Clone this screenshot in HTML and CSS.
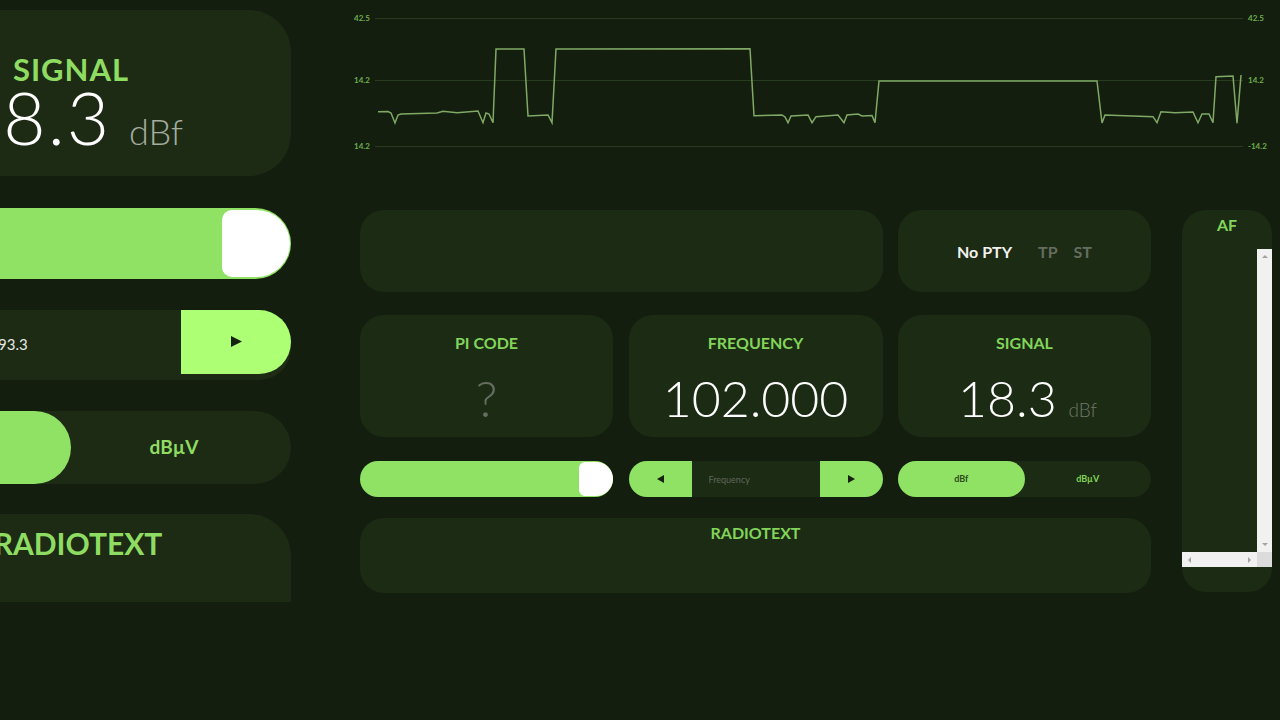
FILE: index.html
```html
<!DOCTYPE html>
<html lang="en">
<head>
    <meta charset="UTF-8">
    <title>Radio Tuner</title>
    <link rel="stylesheet" href="styles.css">
</head>
<body>
    <aside class="side">
        <div class="side-signal">
            <h2 class="side-title">SIGNAL</h2>
            <div class="side-value">18.3 <span class="side-unit">dBf</span></div>
        </div>
        <div class="side-slider"><div class="side-thumb"></div></div>
        <div class="side-freq">
            <span class="side-freq-text">93.3</span>
            <button class="side-freq-btn">
                <svg width="11" height="11" viewBox="0 0 11 11"><polygon points="0,0 11,5.5 0,11"/></svg>
            </button>
        </div>
        <div class="side-toggle">
            <div class="side-toggle-on"></div>
            <div class="side-toggle-off">dBµV</div>
        </div>
        <div class="side-radio"><h2 class="side-title">RADIOTEXT</h2></div>
    </aside>

    <main class="main">
        <svg class="chart" width="989" height="210" viewBox="291 0 989 210">
            <line class="grid-line" x1="375" y1="18.5" x2="1243" y2="18.5"/>
            <line class="grid-line" x1="375" y1="80.5" x2="1243" y2="80.5"/>
            <line class="grid-line" x1="375" y1="146.5" x2="1243" y2="146.5"/>
            <text class="axis" x="354" y="21">42.5</text>
            <text class="axis" x="354" y="83">14.2</text>
            <text class="axis" x="354" y="149">14.2</text>
            <text class="axis" x="1248" y="21">42.5</text>
            <text class="axis" x="1248" y="83">14.2</text>
            <text class="axis" x="1248" y="149">-14.2</text>
            <polyline class="trace" points="378,111.7 388,111.5 391,113 395,123 398,115 401,114 437,113 443,111.3 457,112.7 478,111 483,122.7 486,113 489,114 493,122.7 496,49 524,49 528,116 548,115 552,122.7 556,49 750,48.7 754,115.7 782,115 785,117 788,122.7 791,116 808,115 812,122.7 816,116.7 838,115 844,122.7 847,115 858,114 862,116 872,115.5 875,122.7 879,81 1097,81 1102,123 1105,115 1153,116.7 1157,122.7 1161,111.7 1175,112.7 1193,112 1198,122.7 1202,114 1209,114 1213,122.7 1216,76.7 1233,76 1237,123.3 1241,75"/>
        </svg>

        <div class="panel">
            <div class="board">
                <div class="card span-2"></div>
                <div class="card pty">
                    <span class="pty-name">No PTY</span>
                    <span class="flag">TP</span>
                    <span class="flag">ST</span>
                </div>

                <div class="card stat row-stat">
                    <h3 class="stat-title">PI CODE</h3>
                    <div class="stat-value muted">?</div>
                </div>
                <div class="card stat row-stat">
                    <h3 class="stat-title">FREQUENCY</h3>
                    <div class="stat-value">102.000</div>
                </div>
                <div class="card stat row-stat">
                    <h3 class="stat-title">SIGNAL</h3>
                    <div class="stat-value">18.3 <span class="stat-unit">dBf</span></div>
                </div>

                <div class="slider row-ctrl"><div class="thumb"></div></div>
                <div class="tuner row-ctrl">
                    <button class="tuner-btn tuner-left">
                        <svg width="7" height="8" viewBox="0 0 7 8"><polygon points="7,0 0,4 7,8"/></svg>
                    </button>
                    <span class="tuner-text">Frequency</span>
                    <button class="tuner-btn tuner-right">
                        <svg width="7" height="8" viewBox="0 0 7 8"><polygon points="0,0 7,4 0,8"/></svg>
                    </button>
                </div>
                <div class="toggle row-ctrl">
                    <div class="toggle-opt toggle-on">dBf</div>
                    <div class="toggle-opt">dBµV</div>
                </div>

                <div class="card radio span-3"><h3 class="stat-title">RADIOTEXT</h3></div>
            </div>

            <div class="af">
                <h3 class="stat-title af-title">AF</h3>
                <div class="af-list">
                    <div class="af-items"></div>
                    <div class="bar-v">
                        <span class="arrow arrow-up"></span>
                        <span class="arrow arrow-down"></span>
                    </div>
                    <div class="bar-h">
                        <span class="arrow arrow-left"></span>
                        <span class="arrow arrow-right"></span>
                    </div>
                    <div class="bar-corner"></div>
                </div>
            </div>
        </div>
    </main>
</body>
</html>
```

FILE: styles.css
```css
* {
    box-sizing: border-box;
}

body {
    margin: 0;
    height: 720px;
    overflow: hidden;
    display: flex;
    background: #141e0f;
    font-family: Lato, "Noto Sans", sans-serif;
}

h2, h3 {
    margin: 0;
}

button {
    border: none;
    padding: 0;
    display: flex;
    align-items: center;
    justify-content: center;
}

/* left column, cut off by the window */
.side {
    width: 291px;
    height: 602px;
    flex: none;
    overflow: hidden;
    padding-top: 10px;
    display: flex;
    flex-direction: column;
    gap: 31px;
}

.side > div {
    width: 440px;
    margin-left: -149px;
    flex: none;
    background: #1d2b15;
}

.side-signal {
    height: 166px;
    border-radius: 42px;
    text-align: center;
    padding-top: 40px;
}

.side-title {
    color: #8fdc62;
    font-size: 31px;
    font-weight: 700;
    line-height: 38px;
    letter-spacing: 1px;
}

.side-value {
    color: #fff;
    font-size: 73px;
    font-weight: 300;
    line-height: 70px;
    letter-spacing: 2px;
    margin-top: -6px;
}

.side-unit {
    color: #a4ad9e;
    font-size: 36px;
    letter-spacing: 0;
    margin-left: -4px;
}

.side > .side-slider {
    height: 71px;
    margin-top: 1px;
    border-radius: 36px;
    background: #90e264;
    display: flex;
    justify-content: flex-end;
    padding: 2px 1px;
}

.side-thumb {
    width: 68px;
    border-radius: 10px 34px 34px 10px;
    background: #fff;
}

.side > .side-freq {
    height: 70px;
    border-radius: 32px;
    display: flex;
    justify-content: space-between;
    align-items: flex-start;
}

.side-freq-text {
    color: #e6e8e3;
    font-size: 15px;
    margin: 25px 0 0 147px;
}

.side-freq-btn {
    width: 110px;
    height: 64px;
    background: #adff73;
    border-radius: 0 32px 32px 0;
}

.side-freq-btn svg {
    fill: #16210f;
    margin-bottom: 2px;
}

.side > .side-toggle {
    height: 73px;
    border-radius: 37px;
    display: flex;
}

.side-toggle-on {
    width: 220px;
    border-radius: 37px;
    background: #90e264;
}

.side-toggle-off {
    flex: 1;
    color: #8fdc62;
    font-size: 19px;
    font-weight: 700;
    text-align: center;
    line-height: 71px;
    padding-right: 14px;
}

.side > .side-radio {
    height: 130px;
    margin-top: -1px;
    border-radius: 42px;
    text-align: center;
    padding: 10px 0 0 14px;
}

.side-radio .side-title {
    font-size: 30px;
    letter-spacing: 0;
}

/* right part */
.main {
    flex: 1;
}

.chart {
    display: block;
}

.grid-line {
    stroke: #2a3c20;
    stroke-width: 1;
}

.axis {
    fill: #6fae4e;
    font-size: 8px;
    font-weight: 700;
}

.trace {
    fill: none;
    stroke: #7fa965;
    stroke-width: 1.5;
}

.panel {
    display: flex;
    gap: 31px;
    padding-left: 69px;
}

.board {
    width: 791px;
    display: grid;
    grid-template-columns: 253px 254px 253px;
    column-gap: 15.5px;
    align-content: start;
}

.card {
    background: #1c2b14;
    border-radius: 24px;
    height: 82px;
}

.span-2 {
    grid-column: span 2;
}

.span-3 {
    grid-column: span 3;
}

.pty {
    display: flex;
    align-items: center;
    justify-content: center;
    gap: 16px;
    font-size: 16px;
    font-weight: 700;
}

.pty-name {
    color: #f2f2f0;
    margin-right: 10px;
}

.flag {
    color: #656d60;
}

.row-stat {
    margin-top: 23px;
    height: 122px;
}

.stat {
    text-align: center;
    padding-top: 18px;
}

.stat-title {
    color: #82d45a;
    font-size: 16px;
    font-weight: 700;
    line-height: 20px;
}

.stat-value {
    color: #fff;
    font-size: 50px;
    font-weight: 300;
    line-height: 60px;
    margin-top: 15px;
}

.muted {
    color: #666d61;
}

.stat-unit {
    color: #6f7869;
    font-size: 19px;
    margin: 0 -6px 0 -2px;
}

.row-ctrl {
    margin-top: 24px;
    height: 36px;
}

.slider {
    border-radius: 18px;
    background: #90e264;
    display: flex;
    justify-content: flex-end;
    padding: 1px 0;
}

.thumb {
    width: 34px;
    border-radius: 6px 17px 17px 6px;
    background: #fff;
}

.tuner {
    display: flex;
    align-items: center;
    border-radius: 18px;
    background: #1c2b14;
}

.tuner-btn {
    width: 63px;
    height: 36px;
    background: #90e264;
}

.tuner-btn svg {
    fill: #16210f;
}

.tuner-left {
    border-radius: 18px 0 0 18px;
}

.tuner-right {
    border-radius: 0 18px 18px 0;
}

.tuner-text {
    flex: 1;
    color: #5f675a;
    font-size: 9px;
    padding-left: 17px;
}

.toggle {
    display: flex;
    border-radius: 18px;
    background: #1c2b14;
}

.toggle-opt {
    flex: 1;
    color: #82d45a;
    font-size: 9px;
    font-weight: 700;
    line-height: 36px;
    text-align: center;
    border-radius: 18px;
}

.toggle-on {
    background: #90e264;
    color: #2c4a1c;
}

.radio {
    margin-top: 21px;
    height: 75px;
    text-align: center;
    padding-top: 5px;
}

.af {
    width: 90px;
    height: 382px;
    background: #1c2b14;
    border-radius: 24px;
    display: flex;
    flex-direction: column;
}

.af-title {
    height: 39px;
    padding-top: 5px;
    text-align: center;
}

.af-list {
    height: 318px;
    display: grid;
    grid-template-columns: 1fr 15px;
    grid-template-rows: 1fr 15px;
}

.bar-v, .bar-h {
    background: #f1f1f1;
    display: flex;
    align-items: center;
    justify-content: space-between;
    padding: 6px;
}

.bar-v {
    flex-direction: column;
}

.bar-corner {
    background: #dcdcdc;
}

.arrow {
    width: 0;
    height: 0;
    border: 3px solid transparent;
}

.arrow-up {
    border-top: none;
    border-bottom-color: #a3a3a3;
}

.arrow-down {
    border-bottom: none;
    border-top-color: #a3a3a3;
}

.arrow-left {
    border-left: none;
    border-right-color: #a3a3a3;
}

.arrow-right {
    border-right: none;
    border-left-color: #a3a3a3;
}
```
